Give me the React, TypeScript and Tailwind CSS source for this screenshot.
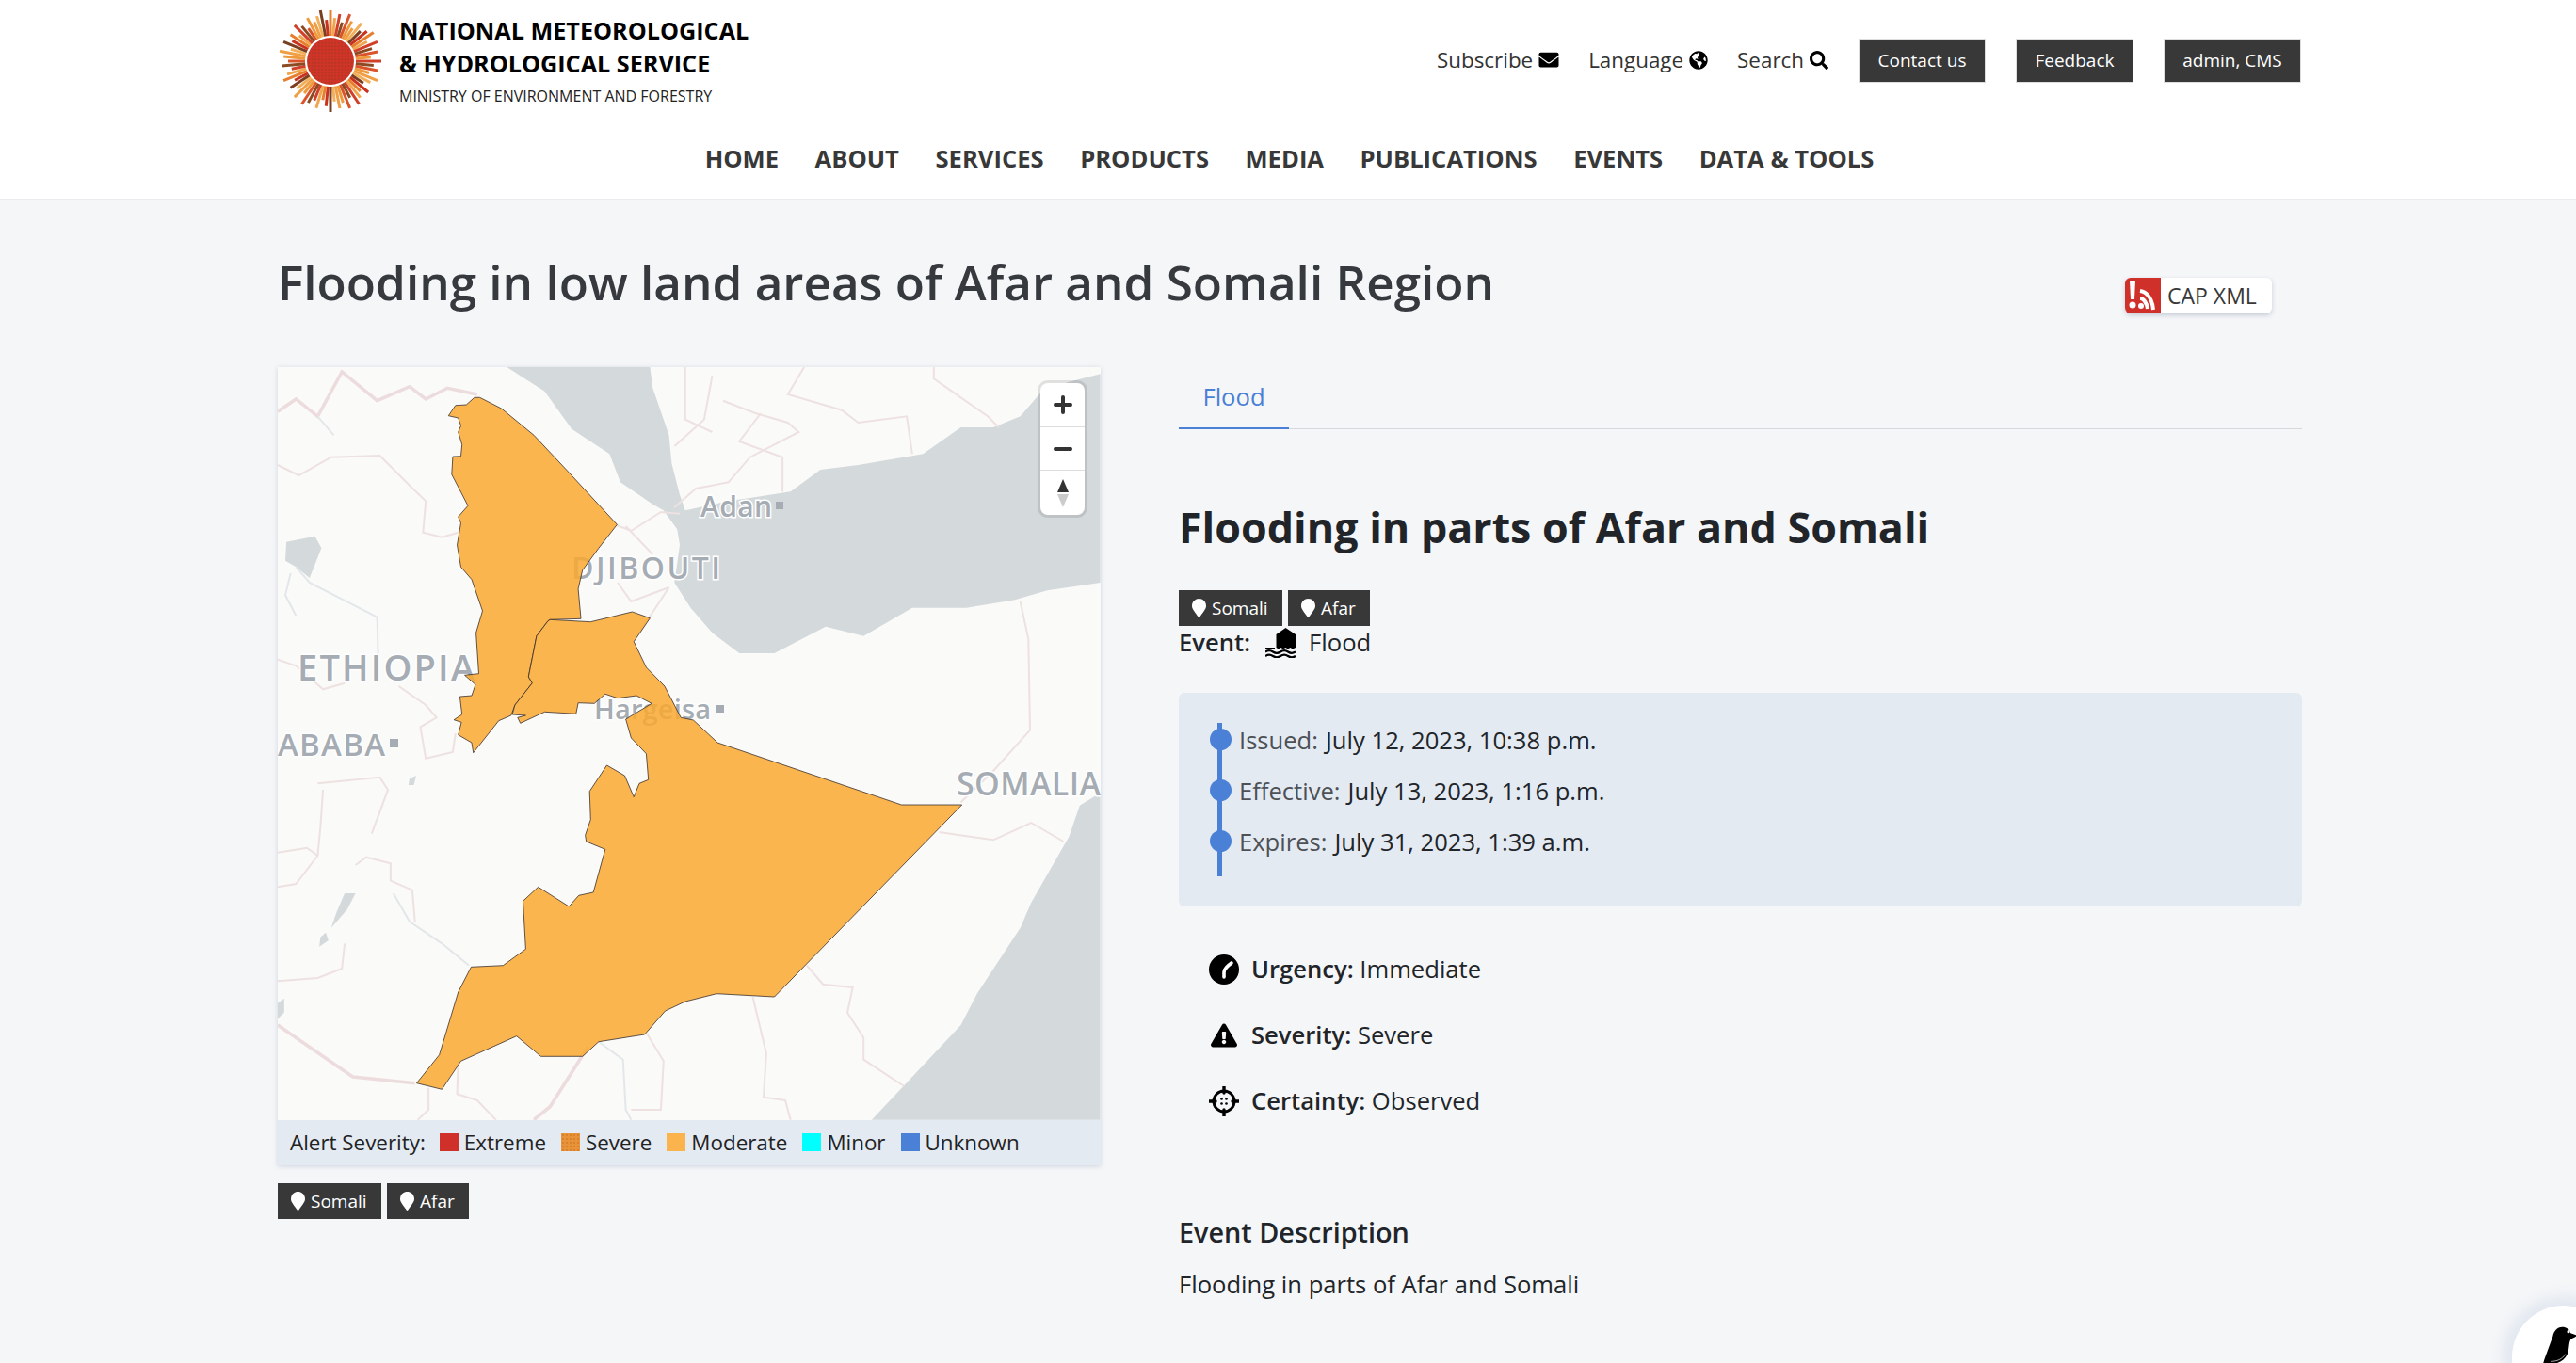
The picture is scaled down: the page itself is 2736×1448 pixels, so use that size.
import { FaEnvelope, FaExclamationTriangle, FaGlobeAmericas, FaMapMarker, FaSearch } from "react-icons/fa";

type Pt = [number, number];

// map shapes were traced from crops, so convert crop coordinates to map pixels
const top = (pts: Pt[]) => pts.map(([x, y]) => `${(x / 1.742 - 15).toFixed(1)},${(y / 3 - 11).toFixed(1)}`).join(" ");
const low = (pts: Pt[]) => pts.map(([x, y]) => `${(x / 1.742 - 15).toFixed(1)},${(y / 3 + 409).toFixed(1)}`).join(" ");

const afar: Pt[] = [[390,130],[400,130],[440,165],[500,250],[560,360],[654,535],[620,610],[590,680],[582,740],[587,835],[530,838],[526,842],[505,890],[490,1020],[497,1040],[465,1110],[458,1143],[435,1160],[388,1262],[385,1230],[360,1205],[366,1165],[352,1157],[367,1140],[363,1083],[385,1080],[392,1045],[372,1015],[398,1010],[393,880],[405,810],[385,710],[365,670],[358,600],[365,530],[360,510],[378,475],[348,375],[350,318],[365,317],[367,280],[360,240],[365,220],[360,195],[342,188],[355,155],[375,153]];
const somaliA: Pt[] = [[530,838],[605,845],[682,813],[715,833],[685,908],[708,990],[742,1050],[772,1150],[795,1158],[840,1230],[1180,1428],[1292,1428]];
const somaliB: Pt[] = [[945,780],[838,770],[780,795],[743,825],[705,900],[620,923],[590,970],[513,970],[468,905],[365,985],[330,1075],[283,1055],[325,965],[360,765],[384,685],[443,680],[485,628],[480,475],[508,430],[565,492],[583,457],[610,447],[632,310],[597,285],[595,265],[605,215],[603,125],[635,42],[668,75],[685,143],[695,100],[712,88]];
const somaliC: Pt[] = [[708,1265],[680,1215],[670,1155],[718,1105],[690,1080],[655,1088],[632,1075],[612,1105],[582,1103],[578,1138],[520,1132],[475,1168],[470,1150],[485,1143],[460,1140],[465,1110],[497,1040],[490,1020],[505,890],[526,842]];

const gulf: Pt[] = [[450,33],[520,110],[570,230],[640,310],[660,400],[720,470],[740,490],[765,550],[770,600],[760,720],[790,800],[830,880],[880,945],[945,945],[1040,860],[1110,890],[1200,800],[1300,800],[1390,775],[1450,745],[1548,720],[1548,55],[1490,80],[1440,110],[1400,190],[1350,225],[1290,225],[1220,310],[1100,345],[1030,360],[975,430],[900,450],[860,460],[780,490],[770,440],[755,340],[750,250],[720,100],[715,33]];
const ocean: Pt[] = [[1548,130],[1510,170],[1490,270],[1420,480],[1400,560],[1320,770],[1290,870],[1125,1172],[1548,1172]];
const lakeTop: Pt[] = [[42,590],[95,572],[107,610],[85,705],[60,670],[40,650]];
const lakesLow: Pt[][] = [
  [[150,450],[170,450],[155,500],[125,560],[135,510]],
  [[115,575],[120,600],[103,620],[105,590]],
  [[26,800],[38,785],[38,830],[26,850]],
  [[270,85],[282,75],[278,105],[268,105]],
];

const bordersTop: Pt[][] = [
  [[26,345],[65,378],[125,320],[215,315],[270,410],[300,460],[295,560],[330,575],[360,560]],
  [[650,535],[680,555],[735,495],[770,500]],
  [[670,540],[720,630]],
  [[655,720],[680,780],[750,735]],
  [[750,735],[695,880]],
  [[780,33],[780,200],[830,240]],
  [[1000,33],[970,120],[1070,170],[1100,210],[1190,190],[1200,310]],
  [[1240,33],[1240,70],[1340,190],[1360,225]],
  [[830,60],[815,200],[760,285]],
  [[850,140],[910,180],[970,210],[990,240],[900,320],[860,400],[800,420],[760,480]],
  [[920,180],[880,270],[960,320],[960,430]],
  [[1400,780],[1415,900],[1418,1190],[1350,1320],[1290,1420]],
  [[250,1050],[300,1110],[320,1150],[290,1180],[300,1280],[350,1260],[355,1200]],
  [[26,965],[60,985],[110,1060],[150,1040]],
];
const bordersLow: Pt[][] = [
  [[1250,255],[1350,280],[1420,225],[1480,285]],
  [[1005,680],[1035,740],[1090,750],[1080,830],[1110,910],[1110,980],[1185,1065]],
  [[905,780],[930,960],[925,1100],[965,1110],[975,1172]],
  [[710,900],[740,985],[735,1140],[680,1140]],
  [[305,1070],[305,1140],[285,1172]],
  [[360,985],[358,1090],[395,1110],[430,1172]],
  [[26,320],[80,305],[100,330],[60,420],[26,430]],
  [[110,120],[105,240],[100,330]],
  [[170,360],[190,335],[235,355],[235,410],[275,440],[280,540]],
  [[150,610],[145,690],[100,720],[26,730]],
  [[200,260],[230,120],[215,80],[100,100]],
];
const strongLow: Pt[][] = [
  [[600,940],[530,1130],[500,1172]],
  [[26,870],[165,1035],[280,1055]],
];
const riversTop: Pt[][] = [
  [[100,190],[130,250]],
  [[60,670],[85,720],[210,830],[212,960]],
  [[50,690],[40,760],[60,825]],
];
const riversLow: Pt[][] = [
  [[240,450],[270,540],[330,610],[380,680]],
  [[620,923],[665,980],[670,1140],[680,1172]],
];

const labelClass = "fill-[#a5acb3] stroke-white [stroke-width:3px] [paint-order:stroke] font-semibold";

function RegionMap() {
  return (
    <svg viewBox="0 0 874 800" className="block h-[800px] w-[874px]">
      <rect width="874" height="800" fill="#fafaf8" />
      <polygon points={top(gulf)} fill="#d4d9dc" />
      <polygon points={low(ocean)} fill="#d4d9dc" />
      <polygon points={top(lakeTop)} fill="#d4d9dc" />
      {lakesLow.map((p, i) => <polygon key={i} points={low(p)} fill="#d4d9dc" />)}
      <g fill="none" stroke="#eee1e1" strokeWidth="2">
        {bordersTop.map((p, i) => <polyline key={i} points={top(p)} />)}
        {bordersLow.map((p, i) => <polyline key={i} points={low(p)} />)}
      </g>
      <g fill="none" stroke="#eddcdd" strokeWidth="3.5">
        {strongLow.map((p, i) => <polyline key={i} points={low(p)} />)}
        <polyline points={top([[26,175],[60,135],[100,190],[145,48],[210,140],[270,95],[300,135],[340,100],[395,120]])} />
      </g>
      <g fill="none" stroke="#e3e7ea" strokeWidth="2">
        {riversTop.map((p, i) => <polyline key={i} points={top(p)} />)}
        {riversLow.map((p, i) => <polyline key={i} points={low(p)} />)}
      </g>
      <g className="font-['Open_Sans',sans-serif]">
        <text x="21" y="333" textLength="188" fontSize="38" className={labelClass}>ETHIOPIA</text>
        <text x="0" y="413" textLength="114" fontSize="33" className={labelClass}>ABABA</text>
        <rect x="119" y="395" width="9" height="9" fill="#a5acb3" />
        <text x="312" y="225" textLength="158" fontSize="32" className={labelClass}>DJIBOUTI</text>
        <text x="449" y="159" textLength="76" fontSize="30" className={labelClass}>Adan</text>
        <rect x="529" y="143" width="8" height="8" fill="#a5acb3" />
        <text x="336" y="374" textLength="124" fontSize="29" className={labelClass}>Hargeisa</text>
        <rect x="466" y="359" width="8" height="8" fill="#a5acb3" />
        <text x="721" y="455" textLength="153" fontSize="34" className={labelClass}>SOMALIA</text>
      </g>
      <g fill="#f9a830" fillOpacity="0.85" stroke="#3a3030" strokeWidth="0.8">
        <polygon points={top(afar)} />
        <polygon points={`${top(somaliA)} ${low(somaliB)} ${top(somaliC)}`} />
      </g>
    </svg>
  );
}

function ZoomControl() {
  return (
    <div className="absolute left-[810px] top-[17px] flex w-[47px] flex-col divide-y divide-[#dddddd] rounded-lg bg-white shadow-[0_0_0_3px_rgba(0,0,0,0.1)]">
      <div className="flex h-[47px] items-center justify-center">
        <svg viewBox="0 0 20 20" className="h-5 w-5"><path d="M10 2v16M2 10h16" stroke="#333333" strokeWidth="4" strokeLinecap="round" /></svg>
      </div>
      <div className="flex h-[46px] items-center justify-center">
        <svg viewBox="0 0 20 20" className="h-5 w-5"><path d="M2 10h16" stroke="#333333" strokeWidth="4" strokeLinecap="round" /></svg>
      </div>
      <div className="flex h-[47px] items-center justify-center">
        <svg viewBox="0 0 14 30" className="h-[30px] w-[14px]">
          <path d="M7 0l6 14H1z" fill="#333333" />
          <path d="M7 30L1 16h12z" fill="#cccccc" />
        </svg>
      </div>
    </div>
  );
}

const legend = [
  { label: "Extreme", swatch: "bg-[#d0302a]" },
  { label: "Severe", swatch: "bg-[#e8923a] bg-[radial-gradient(#d9822b_1px,transparent_1px)] bg-[length:4px_4px]" },
  { label: "Moderate", swatch: "bg-[#fbb44d]" },
  { label: "Minor", swatch: "bg-[#00ffff]" },
  { label: "Unknown", swatch: "bg-[#4a80d6]" },
];

function Tag({ name, wide }: { name: string; wide?: boolean }) {
  return (
    <span className={`flex h-[38px] items-center gap-[6px] bg-[#383838] pl-[14px] text-[19px] text-white ${wide ? "w-[110px]" : "w-[87px]"}`}>
      <FaMapMarker className="h-[20px] w-[15px]" />
      {name}
    </span>
  );
}

function Logo() {
  const colors = ["#d0402a", "#ee9a3c", "#7a3f20", "#f0a64e", "#d9542b", "#f2b05c", "#e67e2e", "#8a4a22", "#ef9f45", "#c8321f"];
  const lengths = [54, 46, 51, 43, 54, 48, 42, 52, 45, 50, 55, 44];
  const rays = Array.from({ length: 64 }, (_, i) => {
    const a = (i * 5.625 * Math.PI) / 180;
    const r = lengths[i % lengths.length];
    return (
      <line
        key={i}
        x1={56 + 27 * Math.cos(a)}
        y1={56 + 27 * Math.sin(a)}
        x2={56 + r * Math.cos(a)}
        y2={56 + r * Math.sin(a)}
        stroke={colors[(i * 7) % colors.length]}
        strokeWidth="3"
      />
    );
  });
  return (
    <svg viewBox="0 0 112 112" className="h-[112px] w-[112px] shrink-0 translate-y-[1px]">
      <defs>
        <pattern id="sun-dots" width="3.5" height="3.5" patternUnits="userSpaceOnUse">
          <circle cx="1.7" cy="1.7" r="0.7" fill="#8a3a1f" />
        </pattern>
      </defs>
      {rays}
      <circle cx="56" cy="56" r="25" fill="#cf3427" />
      <circle cx="56" cy="56" r="25" fill="url(#sun-dots)" />
    </svg>
  );
}

function FloodIcon() {
  return (
    <svg viewBox="0 0 32 32" className="h-[32px] w-[32px]">
      <path d="M21.5 0L32 7v14c-2 1.500-4 1.500-5.500 0-2 1.500-3.500 1.500-5 0-2 1.500-3.500 1.500-5 0-2 1.500-3.500 1.500-5 0V7z" fill="#000000" />
      <path d="M0 22h10" stroke="#000000" strokeWidth="2" />
      <path d="M0 25.500c3-2 5-2 8 0s5 2 8 0 5-2 8 0 5 2 8 0M0 30c3-2 5-2 8 0s5 2 8 0 5-2 8 0 5 2 8 0" fill="none" stroke="#000000" strokeWidth="2.2" />
    </svg>
  );
}

function UrgencyIcon() {
  return (
    <svg viewBox="0 0 32 32" className="h-8 w-8">
      <circle cx="16" cy="16" r="16" fill="#000000" />
      <path d="M16 24v-5c0-4 4-7 8-10" fill="none" stroke="#ffffff" strokeWidth="3.6" strokeLinecap="round" />
    </svg>
  );
}

function CertaintyIcon() {
  return (
    <svg viewBox="0 0 32 32" className="h-8 w-8">
      <circle cx="16" cy="16" r="11" fill="none" stroke="#000000" strokeWidth="3" />
      <path d="M16 0v7M16 25v7M0 16h7M25 16h7" stroke="#000000" strokeWidth="3.4" strokeLinecap="round" />
      <circle cx="13.5" cy="13.5" r="1.3" />
      <circle cx="18.5" cy="13.5" r="1.3" />
      <circle cx="13.5" cy="18.5" r="1.3" />
      <circle cx="18.5" cy="18.5" r="1.3" />
    </svg>
  );
}

function CapIcon() {
  return (
    <svg viewBox="0 0 38 38" className="h-[38px] w-[38px] rounded-l-md">
      <rect width="38" height="38" fill="#d0302a" />
      <path d="M5 3h6l-1 20H6z" fill="#ffffff" />
      <circle cx="8" cy="29" r="3.5" fill="#ffffff" />
      <path d="M16 14c7 1 13 8 14 20M16 22c4 0 7 5 8 11" fill="none" stroke="#ffffff" strokeWidth="4" />
      <circle cx="17" cy="30" r="3" fill="#ffffff" />
    </svg>
  );
}

function Userbar() {
  return (
    <div className="absolute left-[2668px] top-[1387px] h-[110px] w-[110px] rounded-full bg-white pl-[30px] pt-[21px] shadow-[0_0_14px_10px_rgba(205,216,230,0.45)]">
      <svg viewBox="0 0 36 44" className="h-[50px] w-[40px]">
        <path d="M35 9l-6-2c-1-4-4-6-8-6-5 0-8 4-9 9L4 32l-3 10 3 1 4-7c8 1 15-2 18-9 2-5 1-10 3-14 2-2 5-2 6-4z" fill="#000000" />
        <circle cx="27" cy="5.500" r="1.4" fill="#ffffff" />
        <path d="M10 34c6 0 11-2 14-7" fill="none" stroke="#ffffff" strokeWidth="0.6" />
      </svg>
    </div>
  );
}

const nav = ["HOME", "ABOUT", "SERVICES", "PRODUCTS", "MEDIA", "PUBLICATIONS", "EVENTS", "DATA & TOOLS"];
const headerButtons = [
  { label: "Contact us", width: "w-[135px]" },
  { label: "Feedback", width: "w-[125px]" },
  { label: "admin, CMS", width: "w-[146px]" },
];

export default function App() {
  return (
    <div className="relative h-[1448px] w-[2736px] overflow-hidden bg-[#f5f6f8] font-['Open_Sans',sans-serif] text-[#212529]">
      <header className="h-[213px] border-b-2 border-[#e9ebee] bg-white px-[295px]">
        <div className="flex h-[128px] items-center">
          <div className="flex items-center gap-[17px]">
            <Logo />
            <div className="flex flex-col text-black">
              <span className="text-[25.2px] font-bold leading-[35px]">NATIONAL METEOROLOGICAL</span>
              <span className="text-[25.2px] font-bold leading-[35px]">&amp; HYDROLOGICAL SERVICE</span>
              <span className="mt-[5px] text-[16px] leading-[24px] text-[#222222]">MINISTRY OF ENVIRONMENT AND FORESTRY</span>
            </div>
          </div>
          <div className="-mr-[3px] ml-auto flex items-center">
            <span className="flex items-center gap-[6px] text-[22.4px] text-[#333333]">Subscribe <FaEnvelope className="h-[21px] w-[22px] text-black" /></span>
            <span className="ml-[31px] flex items-center gap-[6px] text-[22.4px] text-[#333333]">Language <FaGlobeAmericas className="h-[20px] w-[20px] text-black" /></span>
            <span className="ml-[31px] flex items-center gap-[6px] text-[22.4px] text-[#333333]">Search <FaSearch className="h-[20px] w-[20px] text-black" /></span>
            <div className="ml-[32px] flex gap-[32px]">
              {headerButtons.map((b) => (
                <span key={b.label} className={`flex h-[47px] items-center justify-center border border-[#dddddd] bg-[#383838] text-[19px] text-white ${b.width}`}>{b.label}</span>
              ))}
            </div>
          </div>
        </div>
        <nav className="flex items-center justify-center gap-[38.5px] pl-[3px] pt-[23px]">
          {nav.map((item) => (
            <span key={item} className="text-[25.6px] font-bold leading-[36px] text-[#383838]">{item}</span>
          ))}
        </nav>
      </header>

      <main className="px-[295px]">
        <div className="flex h-[177px] items-start justify-between">
          <h1 className="pt-[55px] text-[51.2px] font-semibold leading-[62px] text-[#363a3e]">Flooding in low land areas of Afar and Somali Region</h1>
          <div className="mr-[28px] mt-[82px] flex h-[38px] w-[156px] items-center gap-[7px] rounded-md bg-white shadow-[0_2px_5px_rgba(90,110,140,0.3)]">
            <CapIcon />
            <span className="text-[23px] text-[#383838]">CAP XML</span>
          </div>
        </div>

        <div className="flex gap-[83px]">
          <div className="w-[874px] shrink-0">
            <div className="shadow-[0_1px_5px_rgba(90,110,140,0.25)]">
              <div className="relative h-[800px]">
                <RegionMap />
                <ZoomControl />
              </div>
              <div className="flex h-[48px] items-center bg-[#e4eaf2] pl-[13px] text-[22.4px] text-[#222222]">
                <span className="mr-[15px]">Alert Severity:</span>
                <div className="flex gap-[16px]">
                  {legend.map((l) => (
                    <span key={l.label} className="flex items-center gap-[6px]">
                      <span className={`h-[19px] w-[20px] ${l.swatch}`} />
                      {l.label}
                    </span>
                  ))}
                </div>
              </div>
            </div>
            <div className="mt-[19px] flex gap-[6px]">
              <Tag name="Somali" wide />
              <Tag name="Afar" />
            </div>
          </div>

          <div className="w-[1193px] shrink-0">
            <div className="flex h-[66px] border-b border-[#d5d9de]">
              <span className="flex h-[66px] w-[117px] items-center justify-center border-b-2 border-[#4a80d6] pt-[1px] text-[25.6px] text-[#4a80d6]">Flood</span>
            </div>
            <h2 className="mt-[74px] text-[44.8px] font-bold leading-[60px] text-[#212529]">Flooding in parts of Afar and Somali</h2>
            <div className="mt-[37px] flex gap-[6px]">
              <Tag name="Somali" wide />
              <Tag name="Afar" />
            </div>
            <div className="flex h-[36px] items-center text-[25.6px]">
              <span className="font-semibold">Event:</span>
              <span className="ml-[16px]"><FloodIcon /></span>
              <span className="ml-[14px]">Flood</span>
            </div>
            <div className="relative mt-[35px] h-[227px] rounded-md bg-[#e4eaf2] pl-[64px] pt-[22px]">
              <div className="absolute left-[41px] top-[32px] h-[163px] w-[5px] bg-[#4a80d6]" />
              {[
                ["Issued:", "July 12, 2023, 10:38 p.m."],
                ["Effective:", "July 13, 2023, 1:16 p.m."],
                ["Expires:", "July 31, 2023, 1:39 a.m."],
              ].map(([k, v]) => (
                <div key={k} className="relative flex h-[54px] items-center pt-[5px] text-[25.6px]">
                  <span className="absolute -left-[31px] top-[16px] h-[23px] w-[23px] rounded-full bg-[#4a80d6]" />
                  <span className="text-[#4d5156]">{k}</span>
                  <span className="ml-[8px]">{v}</span>
                </div>
              ))}
            </div>
            <div className="mt-[32px] flex flex-col pl-[32px] text-[25.6px]">
              <div className="flex h-[70px] items-center gap-[13px]"><UrgencyIcon /><span><b className="font-semibold">Urgency:</b> Immediate</span></div>
              <div className="flex h-[70px] items-center gap-[13px]"><FaExclamationTriangle className="mx-[2px] h-[26px] w-[28px] text-black" /><span><b className="font-semibold">Severity:</b> Severe</span></div>
              <div className="flex h-[70px] items-center gap-[13px]"><CertaintyIcon /><span><b className="font-semibold">Certainty:</b> Observed</span></div>
            </div>
            <h3 className="mt-[84px] text-[28.8px] font-semibold leading-[40px]">Event Description</h3>
            <p className="mt-[16px] text-[25.6px] leading-[40px]">Flooding in parts of Afar and Somali</p>
          </div>
        </div>
      </main>
      <Userbar />
    </div>
  );
}
